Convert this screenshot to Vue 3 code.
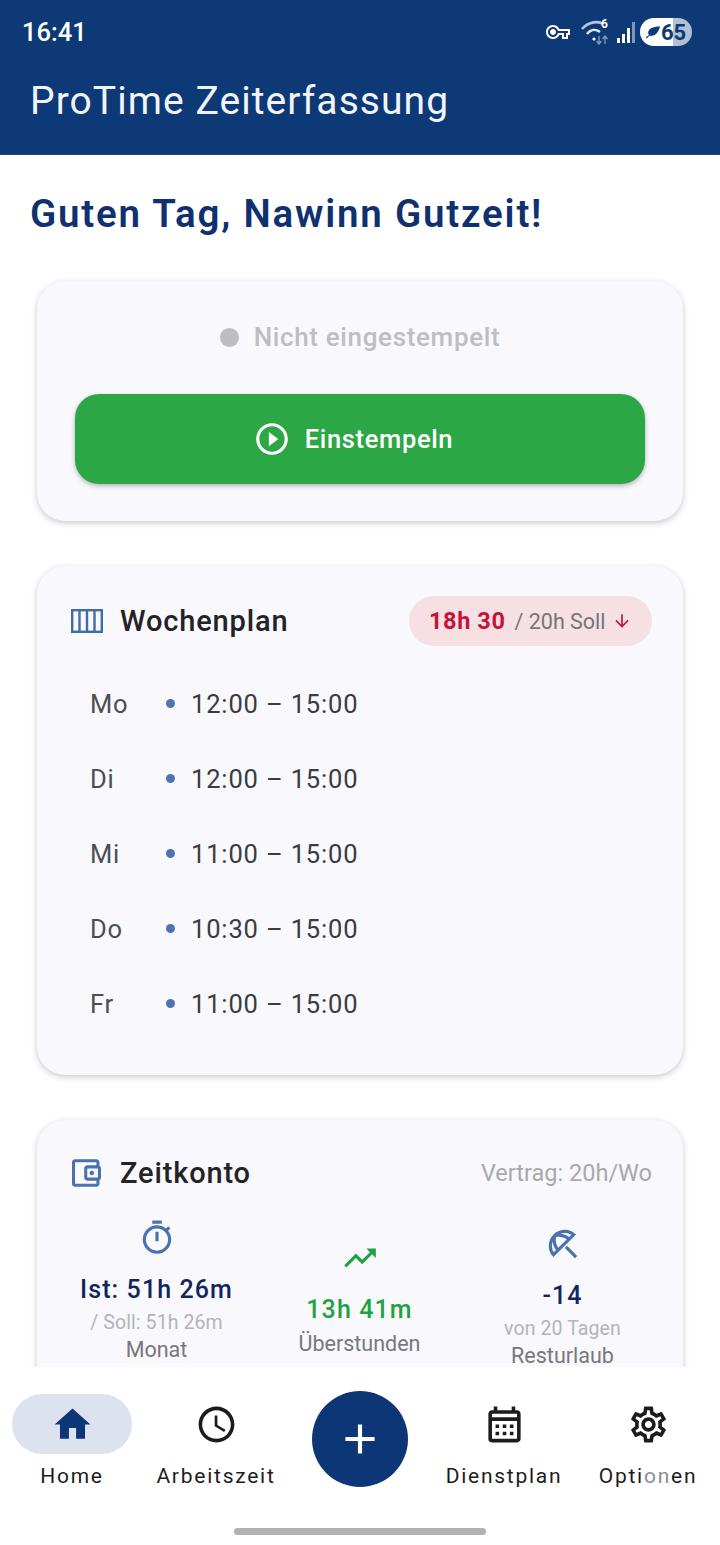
<script setup>
const week = [
  { day: 'Mo', time: '12:00 – 15:00' },
  { day: 'Di', time: '12:00 – 15:00' },
  { day: 'Mi', time: '11:00 – 15:00' },
  { day: 'Do', time: '10:30 – 15:00' },
  { day: 'Fr', time: '11:00 – 15:00' }
]
</script>

<template>
  <div class="screen">
    <header class="appbar">
      <div class="statusbar">
        <span class="clock">16:41</span>
        <div class="status-icons">
          <svg class="key" viewBox="0 0 24 24" fill="#fff"><path d="M22 19h-6v-4h-2.68c-1.14 2.42-3.6 4-6.32 4-3.86 0-7-3.14-7-7s3.14-7 7-7c2.72 0 5.17 1.58 6.32 4H24v6h-2v4zm-4-2h2v-4h2v-2H11.94l-.23-.67C11.01 8.34 9.11 7 7 7c-2.76 0-5 2.24-5 5s2.24 5 5 5c2.11 0 4.01-1.34 4.71-3.33l.23-.67H18v4zM7 15c-1.65 0-3-1.35-3-3s1.35-3 3-3 3 1.35 3 3-1.35 3-3 3z"/></svg>
          <div class="wifi">
            <svg viewBox="0 0 30 26" fill="none" stroke="#b9c6da" stroke-width="2.6">
              <path d="M1 10 C8 2 18 2 22 5"/>
              <path d="M6 15 C10 10 15 10 19 13" stroke="#e4e9f2"/>
              <circle cx="13" cy="20" r="1.6" fill="#fff" stroke="none"/>
              <path d="M18 17v8M15.500 22l2.500 3 2.500-3M24 25v-8M21.500 20l2.500-3 2.500 3" stroke="#7f97bb" stroke-width="1.400"/>
            </svg>
            <span class="wifi-six">6</span>
          </div>
          <div class="signal">
            <i style="height: 5px"></i>
            <i style="height: 9px"></i>
            <i style="height: 15px"></i>
            <i class="off" style="height: 21px"></i>
          </div>
          <div class="battery">
            <svg class="bolt" viewBox="0 0 20 16" fill="#0d3977"><path d="M19 1C11 1 5 3 4 8c-.3 1.500.2 2.700 1 3.500L1 15l1 1 4-3.500c1 .5 2.500.5 4 0 5-1.500 7-6 9-11.500z"/></svg>
            <span>65</span>
          </div>
        </div>
      </div>
      <h1 class="app-title">ProTime Zeiterfassung</h1>
    </header>

    <main class="content">
      <h2 class="greeting">Guten Tag, Nawinn Gutzeit!</h2>

      <section class="card stamp-card">
        <div class="stamp-status">
          <span class="stamp-dot"></span>
          <span>Nicht eingestempelt</span>
        </div>
        <button class="stamp-button">
          <svg viewBox="0 0 24 24" fill="#fff"><path d="M10 16.500l6-4.500-6-4.500v9zM12 2C6.480 2 2 6.480 2 12s4.480 10 10 10 10-4.480 10-10S17.520 2 12 2zm0 18c-4.410 0-8-3.590-8-8s3.590-8 8-8 8 3.590 8 8-3.590 8-8 8z"/></svg>
          Einstempeln
        </button>
      </section>

      <section class="card week-card">
        <div class="card-head">
          <svg class="head-icon" viewBox="0 0 32 24" fill="none" stroke="#3f6cab" stroke-width="2.4"><rect x="1.200" y="1.200" width="29.600" height="21.600"/><path d="M8.500 1v22M16 1v22M23.500 1v22"/></svg>
          <h3>Wochenplan</h3>
          <div class="hours-pill">
            <strong>18h 30</strong>
            <span>/ 20h Soll</span>
            <svg viewBox="0 0 24 24" fill="#c2143a"><path d="M20 12l-1.410-1.410L13 16.170V4h-2v12.170l-5.580-5.590L4 12l8 8 8-8z"/></svg>
          </div>
        </div>
        <ul class="week-list">
          <li v-for="row in week" :key="row.day">
            <span class="day">{{ row.day }}</span>
            <span class="bullet"></span>
            <span class="time">{{ row.time }}</span>
          </li>
        </ul>
      </section>

      <section class="card account-card">
        <div class="card-head">
          <svg class="wallet" viewBox="3 3 19 18" fill="#4a72ad"><path d="M21 7.280V5c0-1.100-.9-2-2-2H5c-1.110 0-2 .9-2 2v14c0 1.100.89 2 2 2h14c1.100 0 2-.9 2-2v-2.280c.59-.35 1-.98 1-1.720V9c0-.74-.41-1.380-1-1.720zM20 9v6h-7V9h7zM5 19V5h14v2h-6c-1.100 0-2 .9-2 2v6c0 1.100.9 2 2 2h6v2H5z"/><circle cx="16" cy="12" r="1.500"/></svg>
          <h3>Zeitkonto</h3>
          <span class="contract">Vertrag: 20h/Wo</span>
        </div>
        <div class="stats">
          <div class="stat stat-month">
            <svg viewBox="0 0 24 24" fill="#4a72ad"><path d="M15 1H9v2h6V1zm-4 13h2V8h-2v6zm8.030-6.610l1.420-1.420c-.43-.51-.9-.99-1.410-1.410l-1.420 1.420C16.070 4.740 14.120 4 12 4c-4.970 0-9 4.030-9 9s4.020 9 9 9 9-4.030 9-9c0-2.120-.74-4.070-1.970-5.610zM12 20c-3.870 0-7-3.130-7-7s3.130-7 7-7 7 3.130 7 7-3.130 7-7 7z"/></svg>
            <div class="stat-value">Ist: 51h 26m</div>
            <div class="stat-sub">/ Soll: 51h 26m</div>
            <div class="stat-label">Monat</div>
          </div>
          <div class="stat stat-over">
            <svg viewBox="0 0 24 24" fill="#1fa341"><path d="M16 6l2.290 2.290-4.880 4.880-4-4L2 16.590 3.410 18l6-6 4 4 6.300-6.290L22 12V6z"/></svg>
            <div class="stat-value green">13h 41m</div>
            <div class="stat-label">Überstunden</div>
          </div>
          <div class="stat stat-leave">
            <svg viewBox="0 0 24 24" fill="#4a72ad"><path d="M21 19.570l-1.427 1.428-6.442-6.442 1.430-1.428zM13.120 3c-2.580 0-5.160.98-7.140 2.950l-.01.01c-3.950 3.950-3.950 10.360 0 14.310l14.300-14.310C18.300 3.990 15.710 3 13.120 3zM6.140 17.270C5.400 16.030 5 14.610 5 13.120c0-.93.16-1.820.46-2.670.19 1.910.89 3.790 2.070 5.440l-1.390 1.380zm2.840-2.840C7.630 12.380 7.120 9.930 7.600 7.600c.58-.12 1.160-.18 1.750-.18 1.800 0 3.550.55 5.080 1.560l-5.450 5.450zm1.470-8.970c.85-.3 1.740-.46 2.670-.46 1.490 0 2.910.4 4.150 1.140l-1.390 1.390c-1.650-1.180-3.520-1.880-5.430-2.070z"/></svg>
            <div class="stat-value">-14</div>
            <div class="stat-sub">von 20 Tagen</div>
            <div class="stat-label">Resturlaub</div>
          </div>
        </div>
      </section>
    </main>

    <nav class="bottom-nav">
      <div class="nav-item">
        <div class="nav-icon active">
          <svg viewBox="0 0 24 24" fill="#0d3677"><path d="M10 20v-6h4v6h5v-8h3L12 3 2 12h3v8z"/></svg>
        </div>
        <span>Home</span>
      </div>
      <div class="nav-item">
        <div class="nav-icon">
          <svg viewBox="0 0 24 24" fill="#1c1c1e"><path d="M11.990 2C6.470 2 2 6.480 2 12s4.470 10 9.990 10C17.520 22 22 17.520 22 12S17.520 2 11.990 2zM12 20c-4.420 0-8-3.580-8-8s3.580-8 8-8 8 3.580 8 8-3.580 8-8 8zm.5-13H11v6l5.250 3.150.75-1.230-4.500-2.670z"/></svg>
        </div>
        <span>Arbeitszeit</span>
      </div>
      <div class="nav-item">
        <button class="fab">
          <svg viewBox="0 0 24 24" fill="#fff"><path d="M19 13h-6v6h-2v-6H5v-2h6V5h2v6h6v2z"/></svg>
        </button>
      </div>
      <div class="nav-item">
        <div class="nav-icon">
          <svg viewBox="0 0 24 24" fill="#1c1c1e"><path d="M19 4h-1V2h-2v2H8V2H6v2H5c-1.110 0-1.990.9-1.990 2L3 20a2 2 0 0 0 2 2h14c1.100 0 2-.9 2-2V6c0-1.100-.9-2-2-2zm0 16H5V10h14v10zm0-12H5V6h14v2zM9 14H7v-2h2v2zm4 0h-2v-2h2v2zm4 0h-2v-2h2v2zm-8 4H7v-2h2v2zm4 0h-2v-2h2v2zm4 0h-2v-2h2v2z"/></svg>
        </div>
        <span>Dienstplan</span>
      </div>
      <div class="nav-item">
        <div class="nav-icon">
          <svg viewBox="0 0 24 24" fill="#1c1c1e"><path d="M19.430 12.980c.04-.32.07-.64.07-.98 0-.34-.03-.66-.07-.98l2.110-1.650c.19-.15.24-.42.12-.64l-2-3.460c-.09-.16-.26-.25-.44-.25-.06 0-.12.01-.17.03l-2.490 1c-.52-.4-1.080-.73-1.690-.98l-.38-2.650C14.460 2.180 14.250 2 14 2h-4c-.25 0-.46.18-.49.42l-.38 2.650c-.61.25-1.170.59-1.690.98l-2.490-1c-.06-.02-.12-.03-.18-.03-.17 0-.34.09-.43.25l-2 3.460c-.13.22-.07.49.12.64l2.110 1.650c-.04.32-.07.65-.07.98 0 .33.03.66.07.98l-2.110 1.650c-.19.15-.24.42-.12.64l2 3.460c.09.16.26.25.44.25.06 0 .12-.01.17-.03l2.490-1c.52.4 1.080.73 1.690.98l.38 2.650c.03.24.24.42.49.42h4c.25 0 .46-.18.49-.42l.38-2.650c.61-.25 1.170-.59 1.690-.98l2.490 1c.06.02.12.03.18.03.17 0 .34-.09.43-.25l2-3.460c.12-.22.07-.49-.12-.64l-2.110-1.650zm-1.980-1.710c.04.31.05.52.05.73 0 .21-.02.43-.05.73l-.14 1.130.89.7 1.080.84-.7 1.210-1.270-.51-1.040-.42-.9.68c-.43.32-.84.56-1.250.73l-1.060.43-.16 1.130-.2 1.350h-1.400l-.19-1.350-.16-1.130-1.060-.43c-.43-.18-.83-.41-1.230-.71l-.91-.7-1.060.43-1.270.51-.7-1.210 1.080-.84.89-.7-.14-1.130c-.03-.31-.05-.54-.05-.74s.02-.43.05-.73l.14-1.130-.89-.7-1.080-.84.7-1.210 1.270.51 1.040.42.9-.68c.43-.32.84-.56 1.250-.73l1.060-.43.16-1.130.2-1.350h1.390l.19 1.350.16 1.130 1.060.43c.43.18.83.41 1.230.71l.91.7 1.060-.43 1.270-.51.7 1.210-1.070.85-.89.7.14 1.130zM12 8c-2.210 0-4 1.790-4 4s1.790 4 4 4 4-1.790 4-4-1.790-4-4-4zm0 6c-1.100 0-2-.9-2-2s.9-2 2-2 2 .9 2 2-.9 2-2 2z"/></svg>
        </div>
        <span>Opti<span class="faded">on</span>en</span>
      </div>
      <div class="home-bar"></div>
    </nav>
  </div>
</template>

<style>
html, body {
  margin: 0;
  background: #fff;
}
</style>

<style scoped>
.screen {
  width: 720px;
  height: 1545px;
  display: flex;
  flex-direction: column;
  overflow: hidden;
  background: #fff;
  font-family: Roboto, "Liberation Sans", sans-serif;
}

.appbar {
  height: 155px;
  flex: none;
  box-sizing: border-box;
  background: #0d3977;
  border-bottom: 1px solid #2c3f78;
  color: #fff;
}

.statusbar {
  height: 64px;
  padding: 0 28px 0 22px;
  display: flex;
  align-items: center;
  justify-content: space-between;
}

.clock {
  font-size: 25.500px;
  font-weight: 500;
}

.status-icons {
  display: flex;
  align-items: center;
}

.key {
  width: 26px;
  height: 24px;
  margin-right: 10px;
}

.wifi {
  position: relative;
  width: 30px;
  height: 26px;
  margin-right: 6px;
}

.wifi svg {
  width: 30px;
  height: 26px;
  display: block;
}

.wifi-six {
  position: absolute;
  top: -2px;
  right: 3px;
  font-size: 12px;
  font-weight: 700;
}

.signal {
  display: flex;
  align-items: flex-end;
  gap: 2px;
  height: 22px;
  margin-right: 5px;
}

.signal i {
  width: 3px;
  background: #fff;
}

.signal i.off {
  background: #7f97bb;
}

.battery {
  width: 52px;
  height: 28px;
  box-sizing: border-box;
  padding-left: 5px;
  border-radius: 14px;
  display: flex;
  align-items: center;
  background: linear-gradient(90deg, #fff 0 64%, #b3bfd3 64%);
  color: #0d3977;
  font-size: 22px;
  font-weight: 700;
}

.bolt {
  width: 16px;
  height: 14px;
  flex: none;
}

.app-title {
  margin: 9px 0 0 30px;
  font-size: 39px;
  line-height: 56px;
  font-weight: 400;
  letter-spacing: 1.050px;
  color: #f1f4fb;
}

.content {
  flex: 1;
  min-height: 0;
  overflow: hidden;
}

.greeting {
  margin: 35px 0 43px 30px;
  font-size: 38.500px;
  line-height: 48px;
  font-weight: 600;
  letter-spacing: 1.800px;
  color: #103170;
}

.card {
  width: 646px;
  box-sizing: border-box;
  margin: 0 0 45px 37px;
  border-radius: 28px;
  background: #f8f8fd;
  box-shadow: 0 2px 6px rgba(0, 0, 0, 0.22);
}

.stamp-card {
  height: 240px;
  padding: 38px;
}

.stamp-status {
  height: 36px;
  margin-bottom: 39px;
  display: flex;
  align-items: center;
  justify-content: center;
  gap: 15px;
  font-size: 26px;
  font-weight: 500;
  letter-spacing: 0.650px;
  color: #bdbdc3;
}

.stamp-dot {
  width: 19px;
  height: 19px;
  border-radius: 50%;
  background: #bdbdc3;
}

.stamp-button {
  width: 570px;
  height: 90px;
  padding: 0 14px 0 0;
  border: 0;
  border-radius: 24px;
  display: flex;
  align-items: center;
  justify-content: center;
  gap: 14px;
  background: #2ca745;
  box-shadow: 0 2px 5px rgba(0, 0, 0, 0.28);
  color: #fff;
  font: 500 25.500px Roboto, sans-serif;
  letter-spacing: 0.650px;
}

.stamp-button svg {
  width: 38px;
  height: 38px;
}

.card-head {
  display: flex;
  align-items: center;
}

.card-head h3 {
  margin: 0;
  font-size: 29px;
  font-weight: 500;
  letter-spacing: 0.850px;
  color: #232326;
}

.head-icon {
  width: 32px;
  height: 24px;
  margin-right: 17px;
}

.wallet {
  width: 29px;
  height: 28px;
  margin-right: 19px;
}

.week-card {
  height: 509px;
  padding: 30px 31px 0 34px;
}

.week-card .card-head {
  height: 50px;
}

.hours-pill {
  margin-left: auto;
  width: 243px;
  height: 50px;
  box-sizing: border-box;
  padding: 0 20px;
  border-radius: 25px;
  display: flex;
  align-items: center;
  background: #f6e0e4;
  font-size: 21.500px;
  color: #77747a;
}

.hours-pill strong {
  margin-right: 9px;
  font-size: 23.500px;
  font-weight: 700;
  letter-spacing: 0.600px;
  color: #c5143b;
}

.hours-pill svg {
  width: 20px;
  height: 20px;
  margin-left: 6px;
}

.week-list {
  list-style: none;
  margin: 20px 0 0;
  padding: 0;
}

.week-list li {
  height: 75px;
  display: flex;
  align-items: center;
  padding-left: 19px;
  font-size: 25.500px;
  letter-spacing: 0.850px;
  color: #3b3b40;
}

.day {
  width: 76px;
  color: #4d4d52;
}

.bullet {
  width: 9px;
  height: 9px;
  margin-right: 16px;
  border-radius: 50%;
  background: #4c74ae;
}

.account-card {
  height: 400px;
  padding: 36px 31px 0 35px;
}

.contract {
  margin-left: auto;
  font-size: 23.500px;
  color: #a8a8ad;
}

.stats {
  width: 609px;
  margin-left: -17px;
  display: grid;
  grid-template-columns: repeat(3, 203px);
}

.stat {
  display: flex;
  flex-direction: column;
  align-items: center;
}

.stat svg {
  width: 38px;
  height: 38px;
}

.stat-month {
  margin-top: 29px;
}

.stat-over {
  margin-top: 49px;
}

.stat-leave {
  margin-top: 35px;
}

.stat-value {
  margin-top: 18px;
  font-size: 25px;
  line-height: 30px;
  font-weight: 500;
  letter-spacing: 1.100px;
  color: #122560;
}

.stat-value.green {
  color: #1fa341;
}

.stat-sub {
  margin-top: 6px;
  font-size: 19.500px;
  line-height: 24px;
  letter-spacing: 0.100px;
  color: #b4b4b8;
}

.stat-label {
  margin-top: 4px;
  font-size: 21.500px;
  line-height: 22px;
  color: #77777c;
}

.stat-over .stat-label {
  margin-top: 8px;
}

.bottom-nav {
  position: relative;
  height: 178px;
  flex: none;
  display: grid;
  grid-template-columns: repeat(5, 144px);
  background: #fff;
}

.nav-item {
  display: flex;
  flex-direction: column;
  align-items: center;
  font-size: 21px;
  letter-spacing: 1.750px;
  color: #1c1c1e;
  white-space: nowrap;
}

.nav-icon {
  width: 120px;
  height: 60px;
  margin: 27px 0 10px;
  border-radius: 30px;
  display: flex;
  align-items: center;
  justify-content: center;
}

.nav-icon.active {
  background: #dce3ef;
}

.nav-icon svg {
  width: 43px;
  height: 43px;
}

.faded {
  color: #8d8d90;
}

.fab {
  width: 96px;
  height: 96px;
  margin-top: 24px;
  padding: 0;
  border: 0;
  border-radius: 50%;
  display: flex;
  align-items: center;
  justify-content: center;
  background: #0d3677;
}

.fab svg {
  width: 50px;
  height: 50px;
}

.home-bar {
  position: absolute;
  left: 234px;
  bottom: 10px;
  width: 252px;
  height: 7px;
  border-radius: 4px;
  background: #b2b2b2;
}
</style>
